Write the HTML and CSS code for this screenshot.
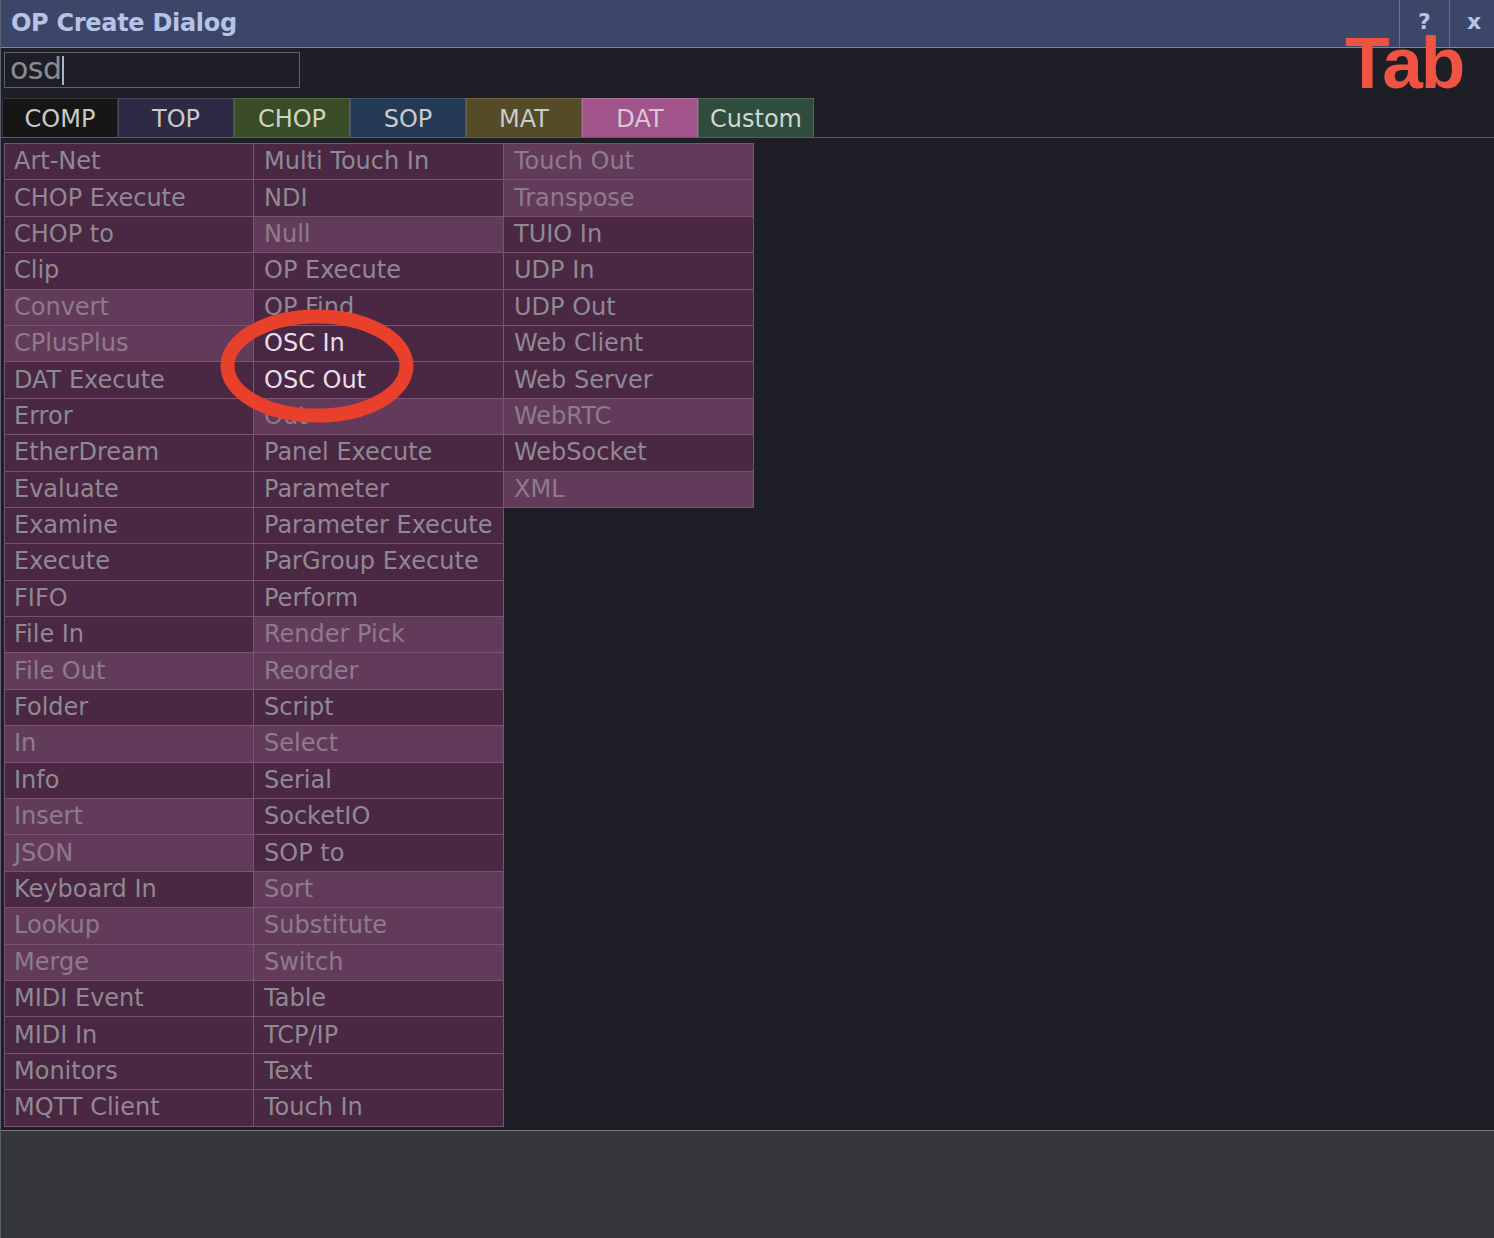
FILE: index.html
```html
<!DOCTYPE html>
<html>
<head>
<meta charset="utf-8">
<title>OP Create Dialog</title>
<link rel="stylesheet" href="styles.css">
</head>
<body>
<div class="window">
  <header class="titlebar">
    <span class="title">OP Create Dialog</span>
    <div class="tb-btns">
      <span class="tb-btn">?</span>
      <span class="tb-btn">x</span>
    </div>
  </header>
  <div class="toolbar">
    <div class="search"><span class="query">osd</span><span class="caret"></span></div>
    <nav class="tabs">
      <span class="tab comp">COMP</span>
      <span class="tab top">TOP</span>
      <span class="tab chop">CHOP</span>
      <span class="tab sop">SOP</span>
      <span class="tab mat">MAT</span>
      <span class="tab dat">DAT</span>
      <span class="tab custom">Custom</span>
    </nav>
  </div>
  <main class="content">
    <div class="grid">
      <div class="col first">
        <div class="cell">Art-Net</div>
        <div class="cell">CHOP Execute</div>
        <div class="cell">CHOP to</div>
        <div class="cell">Clip</div>
        <div class="cell dim">Convert</div>
        <div class="cell dim">CPlusPlus</div>
        <div class="cell">DAT Execute</div>
        <div class="cell">Error</div>
        <div class="cell">EtherDream</div>
        <div class="cell">Evaluate</div>
        <div class="cell">Examine</div>
        <div class="cell">Execute</div>
        <div class="cell">FIFO</div>
        <div class="cell">File In</div>
        <div class="cell dim">File Out</div>
        <div class="cell">Folder</div>
        <div class="cell dim">In</div>
        <div class="cell">Info</div>
        <div class="cell dim">Insert</div>
        <div class="cell dim">JSON</div>
        <div class="cell">Keyboard In</div>
        <div class="cell dim">Lookup</div>
        <div class="cell dim">Merge</div>
        <div class="cell">MIDI Event</div>
        <div class="cell">MIDI In</div>
        <div class="cell">Monitors</div>
        <div class="cell">MQTT Client</div>
      </div>
      <div class="col">
        <div class="cell">Multi Touch In</div>
        <div class="cell">NDI</div>
        <div class="cell dim">Null</div>
        <div class="cell">OP Execute</div>
        <div class="cell">OP Find</div>
        <div class="cell match">OSC In</div>
        <div class="cell match">OSC Out</div>
        <div class="cell dim">Out</div>
        <div class="cell">Panel Execute</div>
        <div class="cell">Parameter</div>
        <div class="cell">Parameter Execute</div>
        <div class="cell">ParGroup Execute</div>
        <div class="cell">Perform</div>
        <div class="cell dim">Render Pick</div>
        <div class="cell dim">Reorder</div>
        <div class="cell">Script</div>
        <div class="cell dim">Select</div>
        <div class="cell">Serial</div>
        <div class="cell">SocketIO</div>
        <div class="cell">SOP to</div>
        <div class="cell dim">Sort</div>
        <div class="cell dim">Substitute</div>
        <div class="cell dim">Switch</div>
        <div class="cell">Table</div>
        <div class="cell">TCP/IP</div>
        <div class="cell">Text</div>
        <div class="cell">Touch In</div>
      </div>
      <div class="col">
        <div class="cell dim">Touch Out</div>
        <div class="cell dim">Transpose</div>
        <div class="cell">TUIO In</div>
        <div class="cell">UDP In</div>
        <div class="cell">UDP Out</div>
        <div class="cell">Web Client</div>
        <div class="cell">Web Server</div>
        <div class="cell dim">WebRTC</div>
        <div class="cell">WebSocket</div>
        <div class="cell dim">XML</div>
      </div>
    </div>
  </main>
  <footer class="bottom"></footer>

  <div class="tab-label">Tab</div>
  <svg class="ring" width="220" height="130" viewBox="0 0 220 130">
    <ellipse cx="110" cy="65" rx="89.5" ry="49.5" fill="none" stroke="#e8402a" stroke-width="14"/>
  </svg>
</div>
</body>
</html>
```

FILE: styles.css
```css
* { box-sizing: border-box; }

html, body {
  margin: 0;
  padding: 0;
  background: #1e1e27;
}

body {
  font-family: "DejaVu Sans", Verdana, sans-serif;
}

.window {
  position: relative;
  width: 1494px;
  height: 1238px;
  display: flex;
  flex-direction: column;
  border-left: 1px solid #5d6070;
  overflow: hidden;
}

/* title bar */
.titlebar {
  height: 48px;
  flex: none;
  display: flex;
  align-items: stretch;
  justify-content: space-between;
  background: #3b4669;
  border-bottom: 1px solid #7b86a8;
}

.title {
  align-self: center;
  margin-left: 10px;
  margin-bottom: 1px;
  font-weight: bold;
  font-size: 24px;
  letter-spacing: -0.3px;
  color: #b6c2e6;
}

.tb-btns {
  display: flex;
}

.tb-btn {
  display: flex;
  align-items: center;
  justify-content: center;
  width: 50px;
  padding-bottom: 4px;
  border-left: 1px solid #66709a;
  font-weight: bold;
  font-size: 22px;
  color: #b6c2e6;
}

.tb-btn + .tb-btn {
  width: 45px;
  padding-left: 4px;
}

/* toolbar */
.toolbar {
  flex: none;
  padding: 4px 0 0 1px;
  border-bottom: 1px solid #5b5b63;
}

.search {
  width: 296px;
  height: 36px;
  margin-left: 2px;
  border: 1px solid #606068;
  display: flex;
  align-items: center;
  padding-left: 5px;
}

.query {
  font-size: 30px;
  color: #8b8c94;
  line-height: 1;
  padding-bottom: 3px;
  letter-spacing: -0.5px;
}

.caret {
  width: 2px;
  height: 29px;
  background: #a9b3cf;
  margin-left: 0;
}

.tabs {
  display: flex;
  margin-top: 10px;
  height: 39px;
}

.tab {
  width: 116px;
  display: flex;
  align-items: center;
  justify-content: center;
  font-size: 24px;
  color: #c9cbc9;
  border: 1px solid rgba(255, 255, 255, 0.14);
  border-bottom: none;
  padding-top: 2px;
}

.tab.comp { background: #161616; }
.tab.top { background: #2e2945; }
.tab.chop { background: #3a4c27; color: #ccd6c4; }
.tab.sop { background: #243a56; }
.tab.mat { background: #554c27; }
.tab.dat { background: #a0548a; color: #dcc6d6; }
.tab.custom { background: #2f4c3c; color: #cfd8d2; }

/* content */
.content {
  flex: 1;
  padding: 5px 0 0 3px;
  border-left: 1px solid #4d4d56;
  margin-left: -1px;
}

.grid {
  display: flex;
  align-items: flex-start;
}

.col {
  width: 250px;
  border-top: 1px solid #7a5272;
  display: flex;
  flex-direction: column;
}

.col.first {
  border-left: 1px solid #7a5272;
}

.cell {
  height: 36.4px;
  display: flex;
  align-items: center;
  padding-left: 9px;
  padding-bottom: 1px;
  background: #4a2743;
  border-right: 1px solid #7a5272;
  border-bottom: 1px solid #7a5272;
  font-size: 24px;
  color: #8f8a92;
  white-space: nowrap;
}

.col + .col .cell {
  padding-left: 10px;
}

.cell.dim {
  background: #633b5a;
  color: #8d7b8b;
}

.cell.match {
  color: #e6dfe8;
}

/* bottom panel */
.bottom {
  flex: none;
  height: 108px;
  background: #36373b;
  border-top: 1px solid #77787d;
}

/* annotation overlays */
.tab-label {
  position: absolute;
  left: 1344px;
  top: 26px;
  font-family: "Liberation Sans", Arial, sans-serif;
  font-weight: bold;
  font-size: 73px;
  line-height: 1;
  letter-spacing: -2px;
  color: #ee5441;
}

.ring {
  position: absolute;
  left: 206px;
  top: 301px;
}
```
